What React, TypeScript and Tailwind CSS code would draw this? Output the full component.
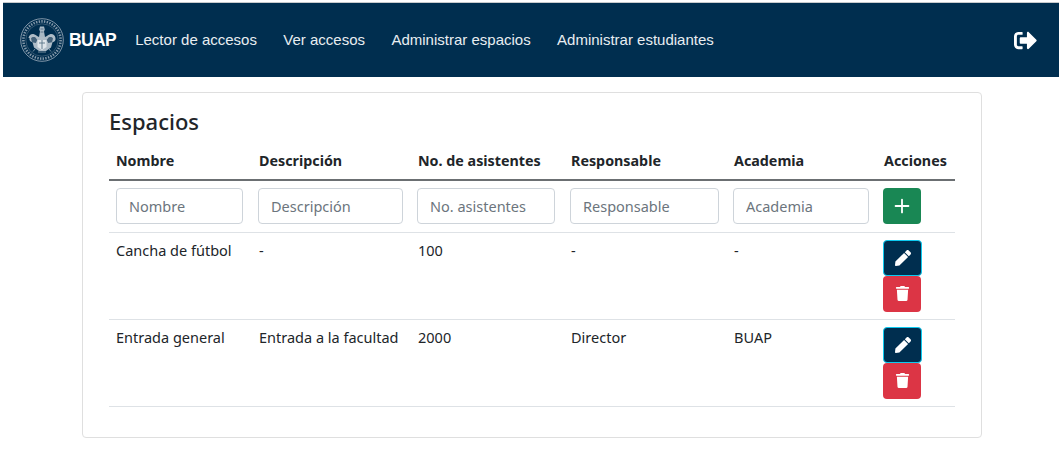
import { FaPen, FaSignOutAlt, FaTrash } from "react-icons/fa";
import { Plus } from "lucide-react";

const rows = [
    { nombre: "Cancha de fútbol", descripcion: "-", asistentes: "100", responsable: "-", academia: "-" },
    { nombre: "Entrada general", descripcion: "Entrada a la facultad", asistentes: "2000", responsable: "Director", academia: "BUAP" },
];

const links = ["Lector de accesos", "Ver accesos", "Administrar espacios", "Administrar estudiantes"];

function Seal() {
    return (
        <svg width="44" height="44" viewBox="0 0 44 44" fill="none" className="shrink-0">
            <circle cx="22" cy="22" r="21.3" stroke="#8ea2b2" strokeWidth="0.9" />
            <circle cx="22" cy="22" r="18.6" stroke="#8398a9" strokeWidth="2.6" strokeDasharray="1.4 1.3" />
            <circle cx="22" cy="22" r="16.2" stroke="#567087" strokeWidth="0.6" />
            {/* column and crest */}
            <path d="M20 8.5h4l.8 3-.8 2 1 5.5h-6l1-5.5-.8-2z" fill="#a9b9c5" />
            <path d="M20.5 11h3M20.5 14h3" stroke="#3c5a72" strokeWidth="0.7" />
            {/* wings */}
            <path d="M8.5 20c.5-3 3-4.5 5.5-3.800 2.500.7 4 2.800 5.500 2.800h5c1.500 0 3-2.100 5.500-2.800 2.500-.7 5 .8 5.500 3.800.4 2.500-1 4-3 4.200l-1.500 5.300-5 3.500h-7l-5-3.500-1.500-5.300c-2-.2-3.400-1.700-3-4.200z" fill="#aebcc7" />
            <path d="M11 20.500c1-1.600 2.800-1.800 4.500-1l1.800 2.500-1.500 3-3.800-.8zM33 20.500c-1-1.600-2.800-1.800-4.500-1l-1.800 2.500 1.500 3 3.800-.8z" fill="#44627a" />
            {/* shield */}
            <path d="M17.500 22h9v7l-4.500 3-4.500-3z" fill="#dfe5ea" />
            <path d="M19 25h6M22 22v9" stroke="#5a7488" strokeWidth="0.9" />
            <path d="M15 31l-2 2.500M29 31l2 2.500M18 34h8" stroke="#8398a9" strokeWidth="0.9" />
        </svg>
    );
}

function Field({ placeholder }: { placeholder: string }) {
    return (
        <input
            placeholder={placeholder}
            className="block h-9 w-full rounded border border-[#ced4da] bg-white px-3 text-[14.5px] text-[#212529] placeholder:text-[#6c757d]"
        />
    );
}

function EditButtons() {
    return (
        <div className="flex flex-col items-start">
            <button className="flex h-9 w-[39px] items-center justify-center rounded border border-[#0dcaf0] bg-[#002e4f] text-white">
                <FaPen size={16} />
            </button>
            <button className="flex h-9 w-[38px] items-center justify-center rounded bg-[#dc3545] text-white">
                <FaTrash size={15} />
            </button>
        </div>
    );
}

export default function App() {
    return (
        <div className="h-[454px] overflow-hidden bg-white pt-[2px] pl-[3px] font-['Noto_Sans',sans-serif] text-[#212529]">
            <nav className="flex h-[75px] items-center border-t border-[#c8cbcd] bg-[#002e4f] pr-[22px] pl-[17px] text-white">
                <Seal />
                <span className="ml-[5px] font-['Liberation_Sans',sans-serif] text-[17.5px] font-bold tracking-[-0.6px]">BUAP</span>
                <div className="ml-[19px] flex gap-[26.4px] pt-px font-['Liberation_Sans',sans-serif] text-[15px]">
                    {links.map((link) => (
                        <a key={link} href="#" className="text-[#e8edf1]">
                            {link}
                        </a>
                    ))}
                </div>
                <FaSignOutAlt size={23} className="ml-auto" />
            </nav>

            <div className="mt-[15px] ml-[79px] h-[346px] w-[900px] rounded border border-[#dfdfdf] px-[26px] pt-[15px]">
                <h2 className="mb-[9px] text-[22px] leading-[26px] font-medium">Espacios</h2>
                <table className="w-[846px] table-fixed border-collapse text-[14.5px]">
                    <colgroup>
                        <col className="w-[142px]" />
                        <col className="w-[159px]" />
                        <col className="w-[153px]" />
                        <col className="w-[163px]" />
                        <col className="w-[150px]" />
                        <col className="w-[79px]" />
                    </colgroup>
                    <thead>
                        <tr className="h-[37px] border-b-2 border-[#6b6f72] text-left text-[14.3px]">
                            <th className="pr-2 pl-[7px] font-bold">Nombre</th>
                            <th className="px-2 font-bold">Descripción</th>
                            <th className="px-2 font-bold">No. de asistentes</th>
                            <th className="px-2 font-bold">Responsable</th>
                            <th className="px-2 font-bold">Academia</th>
                            <th className="px-2 font-bold">Acciones</th>
                        </tr>
                    </thead>
                    <tbody>
                        <tr className="h-[52px] border-b border-[#dee2e6]">
                            <td className="pr-2 pb-px pl-[7px]"><Field placeholder="Nombre" /></td>
                            <td className="px-[7px] pb-px"><Field placeholder="Descripción" /></td>
                            <td className="pr-2 pb-px pl-[7px]"><Field placeholder="No. asistentes" /></td>
                            <td className="px-[7px] pb-px"><Field placeholder="Responsable" /></td>
                            <td className="px-[7px] pb-px"><Field placeholder="Academia" /></td>
                            <td className="pb-px pl-[7px]">
                                <button className="flex h-9 w-[38px] items-center justify-center rounded bg-[#198754] text-white">
                                    <Plus size={22} strokeWidth={2} />
                                </button>
                            </td>
                        </tr>
                        {rows.map((row) => (
                            <tr key={row.nombre} className="h-[87px] border-b border-[#dee2e6] align-top">
                                <td className="pt-[7px] pr-2 pl-[7px] whitespace-nowrap">{row.nombre}</td>
                                <td className="px-2 pt-[7px] whitespace-nowrap">{row.descripcion}</td>
                                <td className="px-2 pt-[7px]">{row.asistentes}</td>
                                <td className="px-2 pt-[7px]">{row.responsable}</td>
                                <td className="px-2 pt-[7px]">{row.academia}</td>
                                <td className="pt-[7px] pl-[7px]"><EditButtons /></td>
                            </tr>
                        ))}
                    </tbody>
                </table>
            </div>
        </div>
    );
}
